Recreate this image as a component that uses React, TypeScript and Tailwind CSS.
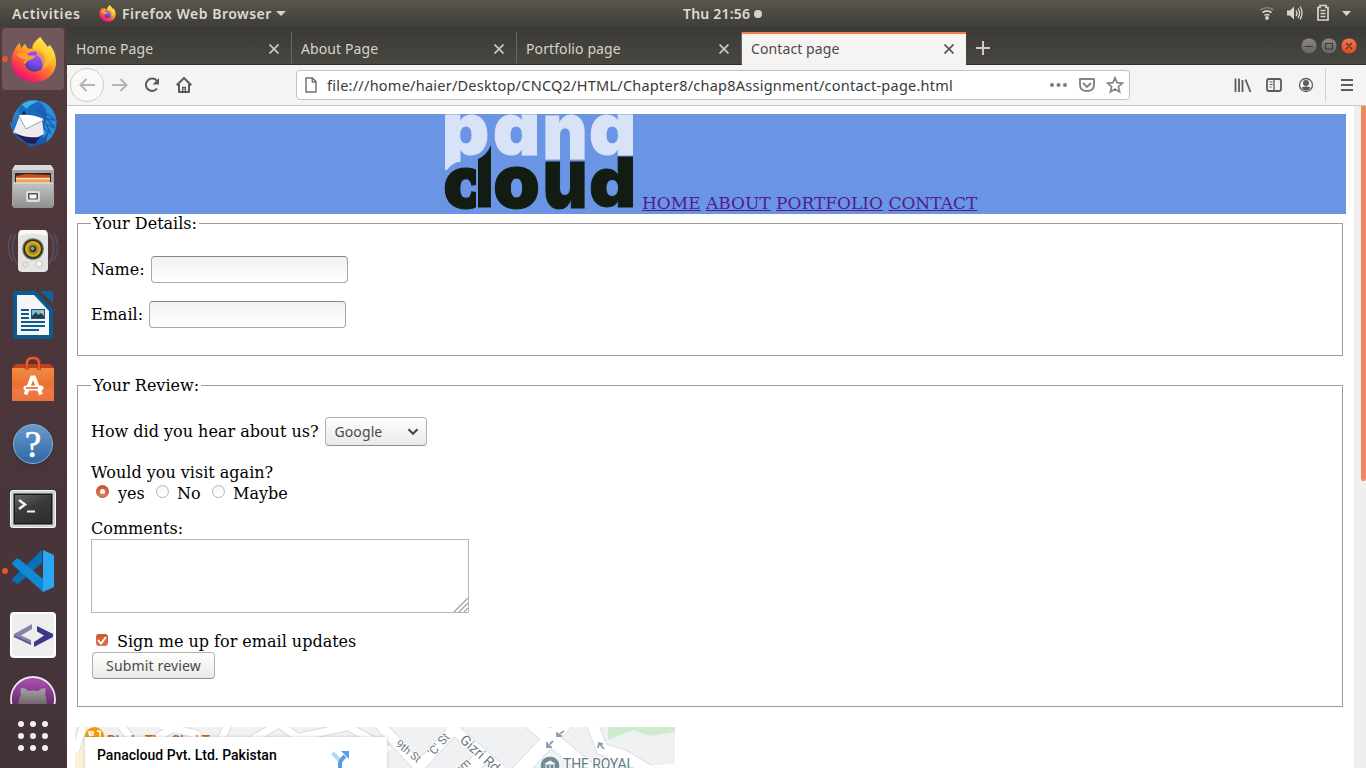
import React from "react";

const UI = "font-['Noto_Sans',sans-serif]";

function FirefoxLogo({ size, id }: { size: number; id: string }) {
  return (
    <svg width={size} height={size} viewBox="0 0 48 48">
      <defs>
        <linearGradient id={id + "a"} x1="0.8" y1="0.1" x2="0.25" y2="0.95">
          <stop offset="0" stopColor="#fff04a" />
          <stop offset="0.35" stopColor="#ffb02a" />
          <stop offset="0.62" stopColor="#ff6434" />
          <stop offset="0.85" stopColor="#f82a55" />
          <stop offset="1" stopColor="#e3128a" />
        </linearGradient>
        <radialGradient id={id + "b"} cx="0.65" cy="0.2" r="0.85">
          <stop offset="0" stopColor="#b04af5" />
          <stop offset="0.55" stopColor="#7a4be8" />
          <stop offset="1" stopColor="#4a35a5" />
        </radialGradient>
        <linearGradient id={id + "c"} x1="0.9" y1="0" x2="0.4" y2="1">
          <stop offset="0" stopColor="#fff44f" />
          <stop offset="0.6" stopColor="#ffc832" />
          <stop offset="1" stopColor="#ff9a2c" />
        </linearGradient>
      </defs>
      <path
        d="M31 1c2 4 5 6 7 10 2 0 2-2 2-2 5 5 7 11 7 18 0 12-10 20-22 20S1.500 38.500 1.500 26C1.500 20 4 13 10 7c0 2 1 4 2 6 0-2 2-4 4-5 0 2 1 4 3 5h4c-1-5 4-9 8-12z"
        fill={"url(#" + id + "a)"}
      />
      <path d="M31 1c-5 4-8 8-7 12 5 0 9 4 11 9 1 4 0 8-1 11 5-3 10-8 11-14 0-4-2-7-5-10 0 2-1 3-2 2-2-4-5-6-7-10z" fill={"url(#" + id + "c)"} />
      <circle cx="25" cy="26" r="10.500" fill={"url(#" + id + "b)"} />
      <path d="M7 19c5-3 9-2 12 1h7c0 3-5 4-7 5s-3 2-3 4c-3-2-2-4 0-5-4 0-7-2-9-5z" fill="#ffa02e" />
      <path d="M24 14c8-1 12 4 13 10 0 5-2 8-4 10 1-7-1-12-6-14 2-2-1-5-3-6z" fill="#ffae2c" opacity=".75" />
    </svg>
  );
}

function Thunderbird() {
  return (
    <svg width="50" height="50" viewBox="0 0 50 50">
      <defs>
        <linearGradient id="tb" x1="0" y1="0" x2="1" y2="1">
          <stop offset="0" stopColor="#3ba5dc" />
          <stop offset=".4" stopColor="#1d62ba" />
          <stop offset="1" stopColor="#1552a6" />
        </linearGradient>
      </defs>
      <path d="M12 8C16 2 24 1 31 3c8 1 15 8 17 17 2 12-5 25-18 27-3 1-8 2-11 1 1 0 1-1 1-2C9 42 2 33 2 23l2 3c0-7 3-13 8-18z" fill="url(#tb)" />
      <path d="M31 3c8 1 15 8 17 17 2 9-2 19-10 24l3-12-6 9 2-16c4-7 2-15-6-22z" fill="#2b8fd6" />
      <path d="M39 16l8 6-8-1 8 9-9-4 5 10-7-6" fill="none" stroke="#1b64b6" strokeWidth="1.500" />
      <path d="M12 17l22 5 2 14-12 6L5 35z" fill="#ececee" />
      <path d="M11 17c8-1 17 0 25 4l-18 9z" fill="#fff" />
      <path d="M11 18l7 13 18-9" fill="none" stroke="#a5a8ad" strokeWidth="1" />
      <path d="M5 34c10 5 18 6 27 5l-5 7-8-1z" fill="#221d58" />
      <path d="M12 9c4-6 12-8 20-6-4 2-5 6-3 10 2 3 6 4 8 9-7-5-15-7-24-5-3-2-3-6-1-8z" fill="#176bc1" />
      <circle cx="16" cy="15" r="1.700" fill="#2d2838" />
      <path d="M14 7c5-5 12-5 17-4-4 2-9 3-12 8z" fill="#45aee0" />
    </svg>
  );
}

function FilesIcon() {
  return (
    <svg width="44" height="46" viewBox="0 0 44 46">
      <defs>
        <linearGradient id="fg" x1="0" y1="0" x2="0" y2="1">
          <stop offset="0" stopColor="#c4c4c3" />
          <stop offset="1" stopColor="#8f8f8e" />
        </linearGradient>
      </defs>
      <path d="M4 1h36l3 5v36H1V6z" fill="#a6a6a4" />
      <path d="M4 1h36l3 5H1z" fill="#dadad8" />
      <rect x="4" y="9" width="36" height="12" fill="#28282a" />
      <path d="M5 12l10-2 24 1v10H5z" fill="#cc4b15" />
      <path d="M5 14h34v6H5z" fill="#f2a35c" />
      <path d="M5 14.500h34" stroke="#f8e3cc" strokeWidth="1.500" />
      <rect x="2" y="18.500" width="40" height="25.500" rx="1" fill="url(#fg)" />
      <path d="M2.500 19h39" stroke="#e6e6e5" />
      <rect x="15" y="27" width="14" height="11" rx="2" fill="#dedede" />
      <rect x="17" y="29" width="10" height="6.500" rx=".8" fill="#555" />
      <rect x="18.500" y="30.500" width="7" height="4" fill="#f4f4f4" />
    </svg>
  );
}

function SpeakerApp() {
  return (
    <svg width="50" height="44" viewBox="0 0 50 44">
      <g fill="none" stroke="#586a90" strokeWidth="1.600" opacity=".5">
        <path d="M8 5c-5 8-5 22 2 31M4 5c-5 9-5 19 1 27M42 5c5 8 5 22-2 31M46 5c5 9 5 19-1 27" />
      </g>
      <path d="M14 1h22c3 0 4 2 4 7l0 31c0 3-2 4-5 4H15c-3 0-5-1-5-4V8c0-5 1-7 4-7z" fill="#e4e4e2" />
      <path d="M14 1h22c2 0 3 2 3 6-8-3-20-3-28 0 0-4 1-6 3-6z" fill="#f9f9f8" />
      <circle cx="25" cy="20" r="10.800" fill="#6b6b63" />
      <circle cx="25" cy="20" r="9.500" fill="#252620" />
      <circle cx="25" cy="20" r="8" fill="#cfad22" />
      <circle cx="25" cy="20" r="5.500" fill="#aa8b12" />
      <circle cx="25" cy="20" r="3.300" fill="#33383b" />
      <circle cx="24.500" cy="19.500" r="1.800" fill="#929b9b" />
      <circle cx="31" cy="35" r="3.200" fill="#f8f8f8" stroke="#c3c3c0" />
      <rect x="15" y="33" width="4.500" height="5" rx="2" fill="none" stroke="#c9c9c7" />
    </svg>
  );
}

function WriterIcon() {
  return (
    <svg width="42" height="50" viewBox="0 0 42 50">
      <path d="M3 1h20l18 18v27q0 3-3 3H4q-3 0-3-3V3q0-2 2-2z" fill="#0b5b93" />
      <path d="M5 5h17l15 16v24H5z" fill="#f5f5f5" />
      <path d="M28 1h10q3 0 3 3v9z" fill="#0c639e" />
      <g fill="#105b8c">
        <path d="M9 19h8v2H9zM9 23h8v2H9zM9 27h8v2H9zM9 31h24v2H9zM9 35h24v2H9zM9 39h18v2H9z" />
        <rect x="19" y="19" width="14" height="10" />
      </g>
      <rect x="20" y="20" width="12" height="8" fill="#7dbce0" />
      <circle cx="30" cy="22" r="1.200" fill="#f6c744" />
      <path d="M20 28v-2l4-4 2 3 3-2 3 3v2z" fill="#343a3c" />
    </svg>
  );
}

function SoftwareIcon() {
  return (
    <svg width="44" height="46" viewBox="0 0 44 46">
      <defs>
        <linearGradient id="sw" x1="0" y1="0" x2="0" y2="1">
          <stop offset="0" stopColor="#ef8b45" />
          <stop offset=".5" stopColor="#ed7031" />
          <stop offset=".7" stopColor="#ee7a42" />
          <stop offset="1" stopColor="#e9733b" />
        </linearGradient>
      </defs>
      <path d="M1 12l4-4h34l4 4z" fill="#bd431a" />
      <rect x="1" y="12" width="42" height="33" fill="url(#sw)" />
      <path d="M16 14V7q0-5 6-5t6 5v7" fill="none" stroke="#b93a18" strokeWidth="3.500" />
      <path d="M16 14V7q0-5 6-5t6 5v7" fill="none" stroke="#ea693e" strokeWidth="1.500" />
      <path d="M14.500 38.500L21 21.500h2l7 17" fill="none" stroke="#fff" strokeWidth="3.800" />
      <path d="M15 32h15" stroke="#fff" strokeWidth="5" strokeLinecap="round" />
      <path d="M15 32h12" stroke="#e56731" strokeWidth="1.600" />
    </svg>
  );
}

function HelpIcon() {
  return (
    <div className="mt-[2px] flex h-10 w-10 items-center justify-center rounded-full border border-[#8caed0] bg-gradient-to-b from-[#6899cc] to-[#2d69a5] shadow-[0_2px_3px_#2224]">
      <span className="font-['Liberation_Serif',serif] text-[37px] leading-none text-white [-webkit-text-stroke:0.6px_white]">?</span>
    </div>
  );
}

function TerminalIcon() {
  return (
    <svg width="46" height="38" viewBox="0 0 46 38" className="mt-[4px]">
      <defs>
        <linearGradient id="tm" x1="0" y1="0" x2="0.600" y2="1">
          <stop offset="0" stopColor="#666" />
          <stop offset=".5" stopColor="#3b3b3b" />
          <stop offset="1" stopColor="#303030" />
        </linearGradient>
      </defs>
      <rect x=".5" y=".5" width="45" height="37" rx="2" fill="#d4d4d4" stroke="#f5f5f5" />
      <rect x="3.500" y="3.500" width="39" height="31" fill="#17181a" />
      <rect x="5" y="5" width="36" height="28" fill="url(#tm)" />
      <path d="M9 10l6 4.500L9 19" fill="none" stroke="#f2f2f2" strokeWidth="2.500" />
      <path d="M17 21.500h8" stroke="#f2f2f2" strokeWidth="2" />
    </svg>
  );
}

function CodeIcon() {
  return (
    <svg width="44" height="44" viewBox="0 0 44 44">
      <path d="M31 1v13L8 34q-1 1-3 0l-3-2q-2-1 0-3z" fill="#0871b5" />
      <path d="M2 16q-2-2 0-3l3-3q1-1 3 0l24 20v13z" fill="#118ad5" />
      <path d="M32 1l11 5v32l-11 5z" fill="#29a8f1" />
    </svg>
  );
}

function BracketsIcon() {
  return (
    <svg width="46" height="46" viewBox="0 0 46 46">
      <rect x="1" y="1" width="44" height="44" rx="3" fill="#eeeeee" stroke="#fff" strokeWidth="2" />
      <path d="M22 12v5l-11 6.500L21 28v5L4 25v-3z" fill="#8583ad" />
      <path d="M27 14l16 8v3L24 35v-5l10-6.500-7-4z" fill="#3b378b" />
      <path d="M4 24l17 8" stroke="#5b578d" strokeWidth="1.500" />
    </svg>
  );
}

function OctoIcon() {
  return (
    <svg width="46" height="46" viewBox="0 0 46 46">
      <defs>
        <linearGradient id="ghf" x1="0" y1="0" x2="0" y2="1">
          <stop offset="0" stopColor="#a9a3a9" />
          <stop offset=".5" stopColor="#75686e" />
          <stop offset=".62" stopColor="#45333a" />
        </linearGradient>
        <linearGradient id="ghb" x1="0" y1="0" x2="0" y2="1">
          <stop offset=".1" stopColor="#a64aaf" />
          <stop offset=".6" stopColor="#64306e" />
        </linearGradient>
      </defs>
      <circle cx="23" cy="23" r="22" fill="url(#ghb)" stroke="#eee8ee" strokeWidth="1.800" />
      <path d="M11 12q5 0 7 3 5-1 10 0 3-3 7-3 1 4 0 7 3 5 1 24H9q-2-19 2-24-1-4 0-7z" fill="url(#ghf)" />
    </svg>
  );
}

function DockItem({ children, dot, active }: { children: React.ReactNode; dot?: boolean; active?: boolean }) {
  return (
    <div className="relative flex h-16 w-[67px] shrink-0 items-center justify-center pr-px">
      {active && <div className="absolute top-px left-[2px] h-[62px] w-[62px] rounded bg-[#6f575b]" />}
      {dot && <div className="absolute top-[29px] left-[2px] h-[6px] w-[6px] rounded-full bg-[#e95420]" />}
      <div className="relative">{children}</div>
    </div>
  );
}

function Dock() {
  return (
    <div className="flex h-[741px] w-[67px] shrink-0 flex-col overflow-hidden bg-gradient-to-b from-[#523a3d] via-[#4a363b] to-[#43343a]">
      <div className="flex h-[677px] flex-col overflow-hidden">
        <DockItem dot active><FirefoxLogo size={47} id="fx" /></DockItem>
        <DockItem><Thunderbird /></DockItem>
        <DockItem><FilesIcon /></DockItem>
        <DockItem><SpeakerApp /></DockItem>
        <DockItem><WriterIcon /></DockItem>
        <DockItem><SoftwareIcon /></DockItem>
        <DockItem><HelpIcon /></DockItem>
        <DockItem><TerminalIcon /></DockItem>
        <DockItem dot><CodeIcon /></DockItem>
        <DockItem><BracketsIcon /></DockItem>
        <DockItem><OctoIcon /></DockItem>
      </div>
      <div className="grid w-[48px] grid-cols-3 gap-[6px] pt-[17px] pl-[18px]">
        {[0, 1, 2, 3, 4, 5, 6, 7, 8].map((n) => (
          <div key={n} className="h-[6px] w-[6px] rounded-full bg-[#f2f0f0]" />
        ))}
      </div>
    </div>
  );
}

function TopBar() {
  return (
    <div className={"flex h-[27px] items-center bg-gradient-to-b from-[#5a564d] to-[#3e3d38] text-[14px] font-semibold text-[#dfdbd2] " + UI}>
      <span className="ml-3 w-[87px] tracking-[0.6px]">Activities</span>
      <FirefoxLogo size={17} id="fs" />
      <span className="ml-[6px] w-[150px] tracking-[0.5px] whitespace-nowrap">Firefox Web Browser</span>
      <svg width="10" height="5" viewBox="0 0 10 5" className="ml-[4px]"><path d="M0 0h10L5 5z" fill="#d8d4cc" /></svg>
      <span className="ml-[397px] w-[68px] tracking-[0.2px] whitespace-nowrap">Thu 21:56</span>
      <span className="ml-[3px] h-2 w-2 rounded-full bg-[#d5d2cb]" />
      <svg width="110" height="27" viewBox="0 0 110 27" className="ml-auto">
        <g fill="none" stroke="#d8d5ce" strokeWidth="1.700">
          <path d="M4.500 10q6.500-4.500 13 0" stroke="#827f77" />
          <path d="M6.500 12.700q4.500-3.500 9 0" />
          <path d="M8.500 15.400q2.500-1.800 5 0" />
        </g>
        <circle cx="11" cy="18" r="1.900" fill="#d8d5ce" />
        <path d="M31 10.500h3l4-4v13l-4-4h-3z" fill="#d8d5ce" />
        <path d="M40 10.500q2 3 0 5.500M42 8.500q3 4.500 0 9.500M44 6.500q4 6.500 0 13" fill="none" stroke="#d8d5ce" strokeWidth="1.300" />
        <path d="M62 7.500h2V5.500h6v2h2V20H62zM64.500 10.500h5M64.500 13.500h5M64.500 16.500h5" fill="none" stroke="#d8d5ce" strokeWidth="1.700" />
        <path d="M86 11h9l-4.500 5z" fill="#d8d5ce" />
      </svg>
    </div>
  );
}

function CloseX({ color }: { color: string }) {
  return (
    <svg width="10" height="10" viewBox="0 0 10 10"><path d="M.5.5l9 9M9.500.5l-9 9" stroke={color} strokeWidth="1.700" /></svg>
  );
}

function Tab({ title, active }: { title: string; active?: boolean }) {
  return active ? (
    <div className="flex h-[33px] w-[224px] items-center justify-between border-t-2 border-[#f07c50] bg-[#f5f4f2] pr-[12px] pb-[2px] pl-[9px] text-[#4a4a4a]">
      <span className="tracking-[0.1px]">{title}</span>
      <CloseX color="#555" />
    </div>
  ) : (
    <div className="flex h-8 w-[225px] items-center justify-between border-r border-[#686660] pt-px pr-[12px] pl-[9px] text-[#d7d3cb]">
      <span className="tracking-[0.1px]">{title}</span>
      <CloseX color="#ccc8c0" />
    </div>
  );
}

function TabBar() {
  return (
    <div className={"flex h-[38px] items-end bg-gradient-to-b from-[#3a3935] to-[#494841] text-[14px] " + UI}>
      <div className="flex h-[38px] flex-1 items-start pt-[5px] shadow-[inset_0_-1px_#302f2c]">
        <Tab title="Home Page" />
        <Tab title="About Page" />
        <Tab title="Portfolio page" />
        <Tab title="Contact page" active />
        <svg width="14" height="14" viewBox="0 0 14 14" className="mt-[9px] ml-[10px]"><path d="M7 0v14M0 7h14" stroke="#cfcbc3" strokeWidth="2" /></svg>
        <svg width="60" height="20" viewBox="0 0 60 20" className="mt-[4px] mr-[7px] ml-auto">
          <defs>
            <linearGradient id="wg" x1="0" y1="0" x2="0" y2="1"><stop stopColor="#8b8982" /><stop offset="1" stopColor="#65635d" /></linearGradient>
            <linearGradient id="wr" x1="0" y1="0" x2="0" y2="1"><stop stopColor="#f37b53" /><stop offset="1" stopColor="#de4918" /></linearGradient>
          </defs>
          <circle cx="10" cy="10" r="8" fill="url(#wg)" stroke="#33322e" strokeWidth=".6" />
          <circle cx="30" cy="10" r="8" fill="url(#wg)" stroke="#33322e" strokeWidth=".6" />
          <circle cx="50" cy="10" r="8" fill="url(#wr)" stroke="#33322e" strokeWidth=".6" />
          <path d="M6 10.500h8M26.500 7.500h7v5.500h-7zM47 7l6 6M53 7l-6 6" fill="none" stroke="#3b3934" strokeWidth="1.200" />
        </svg>
      </div>
    </div>
  );
}

function NavBar() {
  return (
    <div className="flex h-[41px] items-center border-b border-[#c9c5c1] bg-[#f5f4f2]">
      <div className="ml-[3px] flex h-[34px] w-[34px] items-center justify-center rounded-full border border-[#cfccc9] bg-[#faf9f8]">
        <svg width="16" height="14" viewBox="0 0 16 14" fill="none" stroke="#b6b4b2" strokeWidth="2"><path d="M16 7H1.500M7.500 1l-6 6 6 6" /></svg>
      </div>
      <svg width="16" height="14" viewBox="0 0 16 14" fill="none" stroke="#b6b4b2" strokeWidth="2" className="ml-[8px]"><path d="M0 7h14.500M8.500 1l6 6-6 6" /></svg>
      <svg width="16" height="16" viewBox="0 0 16 16" fill="none" stroke="#5a5a5a" strokeWidth="2" className="ml-[16px]">
        <path d="M13 4A6.200 6.200 0 1 0 13 11.500" /><path d="M15 1V7.500H8.500z" fill="#5a5a5a" stroke="none" />
      </svg>
      <svg width="16" height="16" viewBox="0 0 16 16" fill="none" stroke="#5a5a5a" strokeWidth="2" className="ml-[16px]">
        <path d="M.700 8.300L8 1l7.300 7.300M3 7v8h10V7" strokeLinejoin="round" /><path d="M6.700 15V10.500h2.600v4.500" strokeWidth="1.500" />
      </svg>
      <div className="ml-[104px] flex h-[30px] w-[834px] items-center rounded-[4px] border border-[#c5c1bd] bg-white">
        <svg width="12" height="16" viewBox="0 0 12 16" fill="none" stroke="#737373" strokeWidth="1.500" className="ml-[8px]"><path d="M1 1h6.500L11 4.500V15H1zM7.300 1v4H11" strokeLinejoin="round" /></svg>
        <span className={"ml-[10px] pt-px text-[14.500px] tracking-[0.24px] whitespace-nowrap text-[#3a3a3a] " + UI}>file:///home/haier/Desktop/CNCQ2/HTML/Chapter8/chap8Assignment/contact-page.html</span>
        <svg width="76" height="18" viewBox="0 0 76 18" fill="none" stroke="#868482" strokeWidth="1.900" className="mr-[4px] ml-auto">
          <g fill="#7d7b79" stroke="none"><circle cx="3" cy="9" r="2" /><circle cx="9.500" cy="9" r="2" /><circle cx="16" cy="9" r="2" /></g>
          <path d="M31 3h14v5.500q0 6.500-7 6.500t-7-6.500z" strokeLinejoin="round" /><path d="M34 7l4 4 4-4" />
          <path d="M66 1.800l2.100 4.900 5.300.5-4 3.500 1.200 5.200-4.600-2.800-4.600 2.800 1.200-5.200-4-3.500 5.300-.5z" strokeWidth="1.700" />
        </svg>
      </div>
      <svg width="120" height="34" viewBox="0 0 120 34" fill="none" stroke="#5c5b5a" strokeWidth="1.800" className="mr-[10px] ml-auto overflow-visible">
        <path d="M-0.500 10.500v13.500M3 10.500v13.500M6.500 12v12M9.500 11.500l5 12.500" />
        <rect x="31" y="11" width="14" height="12" rx="2" /><path d="M38 11v12" strokeWidth="1.300" /><path d="M33.500 14h3M33.500 16.500h3M33.500 19h2" strokeWidth="1" />
        <circle cx="70" cy="17" r="6.500" strokeWidth="1.300" /><circle cx="70" cy="15" r="3" fill="#5c5b5a" stroke="none" /><path d="M65.500 19.500q4.500-2 9 0-1.500 3-4.500 3t-4.500-3z" fill="#5c5b5a" stroke="none" />
        <path d="M89.500 0v34" stroke="#d5d3d0" strokeWidth="1" />
        <path d="M105 12h12M105 17h12M105 22h12" />
      </svg>
    </div>
  );
}

function PanaLogo() {
  return (
    <svg width="192" height="100" viewBox="0 0 192 100" className="overflow-visible font-['Inter',sans-serif] text-[73px] font-black [font-feature-settings:'cv11']">
      <defs>
        <clipPath id="cutc"><rect x="0" y="40" width="32" height="60" /></clipPath>
        <clipPath id="cutl"><path d="M34 45q9-4 13-14v69H34z" /></clipPath>
        <clipPath id="cutp"><path d="M0 0h60v48H14q-8 2-13 11H0z" /></clipPath>
      </defs>
      <g fill="#d9e3f8" stroke="#d9e3f8" strokeWidth="1">
        <g clipPath="url(#cutp)"><text x="-2" y="40.500">p</text></g>
        <text x="49" y="40.500">a</text>
        <text transform="translate(98.500 45) scale(.95 1.090)">n</text>
        <text x="145" y="40.500">a</text>
      </g>
      <g fill="#121c12" stroke="#121c12" strokeWidth="1">
        <g clipPath="url(#cutc)"><text x="-1" y="93.500">c</text></g>
        <g clipPath="url(#cutl)"><text transform="translate(29 93) scale(1 1.150)">l</text></g>
        <text transform="translate(49 93.500) scale(1.030 1.020)">o</text>
        <text transform="translate(98.500 94) scale(.95 1.160)">u</text>
        <text transform="translate(145 93) scale(1 .95)">d</text>
      </g>
    </svg>
  );
}

const field = "h-[27px] w-[197px] rounded-[4px] border border-[#aaa7a4] border-t-[#888683] bg-gradient-to-b from-[#f1f1f1] to-white outline-none";
const button = "flex items-center rounded-[4px] border border-[#b4b1ae] border-b-[#908e8b] bg-gradient-to-b from-white to-[#ebe9e7] text-[14px] text-[#4a4a4a]";

function Radio({ on }: { on?: boolean }) {
  return on ? (
    <span className="mb-[4px] flex h-[13px] w-[13px] items-center justify-center rounded-full border border-[#b4512c] bg-gradient-to-b from-[#c8532a] to-[#e4825d]"><span className="h-[5px] w-[5px] rounded-full bg-white" /></span>
  ) : (
    <span className="mb-[4px] h-[13px] w-[13px] rounded-full border border-[#b8b5b2] bg-gradient-to-b from-[#f5f5f5] to-white" />
  );
}

function MapStrip() {
  return (
    <div className="relative mt-[20px] ml-[8px] h-[41px] w-[600px] overflow-hidden pt-[10px] pl-[10px]">
      <svg width="600" height="41" viewBox="0 0 600 41" className="absolute top-0 left-0 font-['Roboto',sans-serif]">
        <rect width="600" height="41" fill="#eff1f3" />
        <path d="M0 0h12v41H0z" fill="#fdf1d5" />
        <g fill="none" stroke="#d9dce0" strokeWidth="9">
          <path d="M0 25L8 0M45-2l12 14M75 14L105-2M85-2l40 10M145 14l8-16M175 14L205-4M205-2l20 14M225 10l55-12M270-2l45 25" />
        </g>
        <g fill="none" stroke="#fff" strokeWidth="7">
          <path d="M0 25L8 0M45-2l12 14M75 14L105-2M85-2l40 10M145 14l8-16M175 14L205-4M205-2l20 14M225 10l55-12M270-2l45 25" />
        </g>
        <path d="M533 0h67v5l-25 4-17-6-25 10z" fill="#ceebce" />
        <g fill="none" stroke="#dce0e5">
          <path d="M300-8l50 55M346 38l32-35M374-2l58 50" strokeWidth="12" />
          <path d="M437 52L498-12M445-14l80 66M390 50l16-20" strokeWidth="16" />
          <path d="M516-6l11 28 22 7 30 18" strokeWidth="13" />
        </g>
        <g fill="none" stroke="#fff">
          <path d="M300-8l50 55M346 38l32-35M374-2l58 50" strokeWidth="10" />
          <path d="M437 52L498-12M445-14l80 66M390 50l16-20" strokeWidth="14" />
          <path d="M516-6l11 28 22 7 30 18" strokeWidth="11" />
        </g>
        <path d="M560 40l40-3v4z" fill="#fff" />
        <circle cx="19.500" cy="9.500" r="9.500" fill="#f49a0b" />
        <path d="M16 4v5M18 4v5M16 9q-2 0-2-5M22 4h3v9M14 13h5" fill="none" stroke="#fff" strokeWidth="1.500" />
        <text x="32" y="18.500" fontSize="14" fontWeight="500" fill="#c96810" textLength="103">Bhola The Chai T</text>
        <g fill="#6e7780" stroke="#fff" strokeWidth="2" paintOrder="stroke">
          <text x="320" y="18" fontSize="11" transform="rotate(39 320 18)">9th St</text>
          <text x="358" y="30" fontSize="12" transform="rotate(-48 358 30)">'C' St</text>
          <text x="384" y="14" fontSize="14" transform="rotate(42 384 14)">Gizri Rd</text>
          <text x="384" y="48" fontSize="12" transform="rotate(-42 384 48)">em</text>
        </g>
        <g stroke="#8e9bb8" strokeWidth="1.800" fill="none">
          <path d="M489 4l-7 5m0-4v4h5M478 14l-6 6m0-5v5h5M529 22l-5-6m-1 5l1-5 4 1" />
        </g>
        <circle cx="475" cy="39" r="10" fill="#718c98" stroke="#fff" />
        <path d="M470 37h10l-5-3zM471 38v5M475 38v5M479 38v5" fill="#fff" stroke="#fff" />
        <text x="488" y="42" fontSize="14" fill="#5e7b88" stroke="#fff" strokeWidth="2" paintOrder="stroke" textLength="71">THE ROYAL</text>
      </svg>
      <div className="relative flex h-[31px] w-[302px] bg-white px-[12px] shadow-[0_0_3px_#0003]">
        <span className="mt-[9px] w-[234px] font-['Roboto',sans-serif] text-[14px] leading-[18px] font-medium text-black">Panacloud Pvt. Ltd. Pakistan</span>
        <svg width="19" height="17" viewBox="0 0 19 17" fill="none" strokeWidth="4" className="mt-[14px]">
          <path d="M1.500 2l7 7" stroke="#b8d6f6" /><path d="M9 17v-5q0-2 5-7" stroke="#5c9be8" /><path d="M10 0h8v8z" fill="#5c9be8" />
        </svg>
      </div>
    </div>
  );
}

function Page() {
  return (
    <div className="flex h-[662px] overflow-hidden bg-white font-['DejaVu_Serif',serif] text-[16px] leading-[19px] text-black">
      <div className="w-[1287px] pt-2">
        <header className="ml-2 flex h-[100px] w-[1271px] items-end bg-[#6a95e4] pl-[369px]">
          <PanaLogo />
          <nav className="ml-[6px] pb-px text-[17px] whitespace-nowrap text-[#551a8b]">
            <a className="underline">HOME</a> <a className="underline">ABOUT</a> <a className="underline">PORTFOLIO</a> <a className="underline">CONTACT</a>
          </nav>
        </header>
        <fieldset className="ml-[10px] h-[142px] w-[1266px] border border-[#9b9b9b] px-[13px]">
          <legend className="px-[2px]">Your Details:</legend>
          <div className="mt-[23px] flex h-[27px] items-center"><label className="mr-[6px]">Name:</label><input className={field} /></div>
          <div className="mt-[18px] flex h-[27px] items-center"><label className="mr-[6px]">Email:</label><input className={field} /></div>
        </fieldset>
        <fieldset className="mt-[20px] ml-[10px] h-[331px] w-[1266px] border border-[#9b9b9b] px-[13px]">
          <legend className="px-[2px]">Your Review:</legend>
          <div className="mt-[22px] flex h-[29px] items-center">
            <label className="mr-[6px]">How did you hear about us?</label>
            <div className={"h-[29px] w-[102px] justify-between pr-[7px] pl-[9px] tracking-[0.1px] " + button + " " + UI}>
              Google
              <svg width="12" height="8" viewBox="0 0 12 8"><path d="M1.500 1.200L6 5.700l4.500-4.500" fill="none" stroke="#4a4a4a" strokeWidth="2.200" /></svg>
            </div>
          </div>
          <div className="mt-[17px]">Would you visit again?</div>
          <div className="mt-[2px] flex h-[19px] items-center pl-[5px]">
            <Radio on /><span className="ml-[9px] w-[38px]">yes</span>
            <Radio /><span className="ml-[8px] w-[35px]">No</span>
            <Radio /><span className="ml-[8px]">Maybe</span>
          </div>
          <div className="mt-[16px]">Comments:</div>
          <div className="mt-px flex h-[74px] w-[378px] items-end justify-end border border-[#b9b7b2]">
            <svg width="15" height="14" viewBox="0 0 15 14"><path d="M1 14L15 0M6 14l9-9M11 14l4-4" stroke="#aaa9a6" strokeWidth="1.500" /></svg>
          </div>
          <div className="mt-[19px] flex h-[19px] items-center pl-[5px]">
            <span className="mb-[3px] flex h-3 w-3 items-center justify-center rounded-[3px] bg-gradient-to-b from-[#c9562e] to-[#df764f]">
              <svg width="10" height="9" viewBox="0 0 10 9"><path d="M1 4l3 3.500L9 1" fill="none" stroke="#fff" strokeWidth="1.800" /></svg>
            </span>
            <span className="ml-[9px]">Sign me up for email updates</span>
          </div>
          <div className={"mt-px ml-px h-[27px] w-[123px] justify-center tracking-[0.15px] whitespace-nowrap " + button + " " + UI}>Submit review</div>
        </fieldset>
        <MapStrip />
      </div>
      <div className="flex w-3 justify-end bg-[#f0efee]"><div className="h-[375px] w-[5px] rounded-b-sm bg-[#f08763]" /></div>
    </div>
  );
}

export default function App() {
  return (
    <div className="h-[768px] w-[1366px] overflow-hidden">
      <TopBar />
      <div className="flex h-[741px]">
        <Dock />
        <main className="w-[1299px]">
          <TabBar />
          <NavBar />
          <Page />
        </main>
      </div>
    </div>
  );
}
